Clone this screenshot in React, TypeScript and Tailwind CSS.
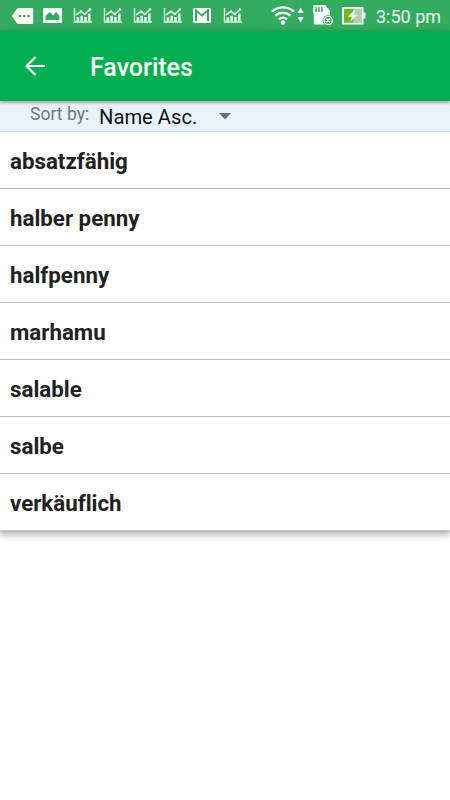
const words = [
  "absatzfähig",
  "halber penny",
  "halfpenny",
  "marhamu",
  "salable",
  "salbe",
  "verkäuflich",
];

function MoreIcon() {
  return (
    <svg width="22" height="16" viewBox="0 0 22 16">
      <path d="M6.5 0H20a1.2 1.2 0 0 1 1.2 1.2v13.6A1.2 1.2 0 0 1 20 16H6.5a2 2 0 0 1-1.6-.8L.3 8.8a1.4 1.4 0 0 1 0-1.6L4.9.8A2 2 0 0 1 6.5 0Z" fill="#fff" />
      <g fill="#4a9566">
        <circle cx="8" cy="8" r="1.3" />
        <circle cx="12.3" cy="8" r="1.3" />
        <circle cx="16.6" cy="8" r="1.3" />
      </g>
    </svg>
  );
}

function PictureIcon() {
  return (
    <svg width="19" height="15" viewBox="0 0 19 15">
      <path
        fillRule="evenodd"
        d="M1 0h17a1 1 0 0 1 1 1v13a1 1 0 0 1-1 1H1a1 1 0 0 1-1-1V1a1 1 0 0 1 1-1ZM2.5 12h14V8.500l-2.400-3.700c-.5-.8-1.200-.8-1.700 0L10.300 7.500 7.600 4.800c-.6-.7-1.200-.7-1.700 0L2.500 8Z"
        fill="#fff"
      />
    </svg>
  );
}

function ChartIcon() {
  return (
    <svg width="19" height="15" viewBox="0 0 19 15" fill="none">
      <path d="M1.5 0v14H19" stroke="#d9efe1" strokeWidth="1.4" />
      <path d="M3.600 13.500V9.200h2.600v4.300ZM7.400 13.500V7.800h2.600v5.700ZM11.200 13.500V9h2.600v4.500ZM15 13.500V5.500h2.600v8Z" fill="#e2f3e8" />
      <path d="M3 6.800 8 3.300l3.800 3L17.500.9" stroke="#e2f3e8" strokeWidth="1.500" />
      <circle cx="8" cy="3.600" r="1.200" fill="#e2f3e8" />
      <circle cx="11.800" cy="6" r="1.200" fill="#e2f3e8" />
      <circle cx="17" cy="1.500" r="1.300" fill="#e2f3e8" />
    </svg>
  );
}

function MailIcon() {
  return (
    <svg width="18" height="15" viewBox="0 0 18 15">
      <rect width="18" height="15" rx="1.5" fill="#fff" />
      <path d="M3 13V2.300L9 7.600l6-5.300V13" fill="none" stroke="#3d9e61" strokeWidth="1.900" />
    </svg>
  );
}

function WifiIcon() {
  return (
    <svg width="34" height="20" viewBox="0 0 34 20" fill="none">
      <g stroke="#fff" strokeWidth="2.400">
        <path d="M1 6.600a16.500 16.500 0 0 1 22 0" />
        <path d="M4.500 10.500a11.500 11.500 0 0 1 15 0" />
        <path d="M7.900 14.300a6.400 6.400 0 0 1 8.200 0" />
      </g>
      <circle cx="12" cy="17.500" r="2.300" fill="#fff" />
      <path d="M29.500 2.500l3.200 5.500h-6.400ZM29.500 17.500l3.200-5.500h-6.400Z" fill="#fff" />
    </svg>
  );
}

function SdCardIcon() {
  return (
    <svg width="21" height="21" viewBox="0 0 21 21" fill="none">
      <path d="M1.500 0h10.500L17 5.500v12.500a1.500 1.500 0 0 1-1.500 1.500h-13.500A1.500 1.500 0 0 1 .8 18V9L0 8V1.500A1.500 1.500 0 0 1 1.500 0Z" fill="#fff" />
      <path d="M3 2v5M6 2v5M9 2v5" stroke="#34a85e" strokeWidth="1.500" />
      <circle cx="15.200" cy="15.500" r="5.600" fill="#34a85e" />
      <circle cx="15.200" cy="15.500" r="4.100" stroke="#fff" strokeWidth="1.400" />
      <path d="m13.400 13.700 3.600 3.600m0-3.600-3.600 3.600" stroke="#fff" strokeWidth="1.500" />
    </svg>
  );
}

function BatteryIcon() {
  return (
    <svg width="24" height="18" viewBox="0 0 24 18">
      <path d="M21 5.500h2.500v6H21Z" fill="#fff" />
      <rect x=".8" y=".8" width="19.900" height="15.900" fill="#a9d6ae" stroke="#fff" strokeWidth="1.600" />
      <path d="M2 2h9.500v13.500H2Z" fill="#73b622" />
      <path d="m13.300 2.500-7.500 7.200h4.200l-2 5.300 7.500-7.200h-4.100Z" fill="#fff" />
    </svg>
  );
}

function StatusBar() {
  return (
    <div className="flex h-[31px] items-center bg-[#34ac60] pl-3">
      <div className="flex h-full w-[34px] items-center">
        <MoreIcon />
      </div>
      <div className="mr-[11px] -ml-[3px]">
        <PictureIcon />
      </div>
      <div className="flex gap-[11px]">
        <ChartIcon />
        <ChartIcon />
        <ChartIcon />
        <ChartIcon />
        <div className="mr-px">
          <MailIcon />
        </div>
        <ChartIcon />
      </div>
      <div className="ml-[29px] pb-px">
        <WifiIcon />
      </div>
      <div className="ml-2">
        <SdCardIcon />
      </div>
      <div className="ml-2">
        <BatteryIcon />
      </div>
      <span className="ml-[10px] pt-[2px] text-[18px] leading-none whitespace-nowrap text-[#edf8f1]">3:50 pm</span>
    </div>
  );
}

function AppBar() {
  return (
    <header className="relative flex h-[70px] items-center bg-[#02ae50] pl-[25px] text-white shadow-[0_1px_4px_rgba(0,0,0,0.45)]">
      <svg width="20" height="20" viewBox="0 0 20 20" fill="none" stroke="#fff" strokeWidth="2.200">
        <path d="M20 10H2M10.500 1 1.500 10l9 9" />
      </svg>
      <h1 className="ml-[45px] pt-[3px] text-[25px] leading-none font-medium">Favorites</h1>
    </header>
  );
}

function SortBar() {
  return (
    <div className="flex h-[31px] items-start border-b border-[#d3dce2] bg-[#e7f2f9] pl-[30px]">
      <span className="w-[69px] pt-[3px] text-[17.600px] leading-[20px] text-[#70767a]">Sort by:</span>
      <button className="flex items-center pt-[4px] text-[20.200px] leading-[24px] text-[#111]">
        Name Asc.
        <svg className="ml-[22px] -mt-[2px]" width="12" height="7" viewBox="0 0 12 7">
          <path d="M0 0h12L6 6.500Z" fill="#686e72" />
        </svg>
      </button>
    </div>
  );
}

export default function App() {
  return (
    <div className="h-[800px] w-[450px] overflow-hidden bg-[#fefefe] font-[Roboto,sans-serif]">
      <StatusBar />
      <AppBar />
      <SortBar />
      <ul className="shadow-[0_5px_5px_rgba(0,0,0,0.22)]">
        {words.map((word) => (
          <li
            key={word}
            className="flex h-[57px] items-center border-b border-[#bdbdbd] bg-[#fefefe] pt-[4px] pl-[10px] text-[22.300px] font-bold text-[#212121] shadow-[0_1px_1px_rgba(0,0,0,0.1)] [font-variant-ligatures:none] last:border-[#cfcfcf]"
          >
            {word}
          </li>
        ))}
      </ul>
    </div>
  );
}
